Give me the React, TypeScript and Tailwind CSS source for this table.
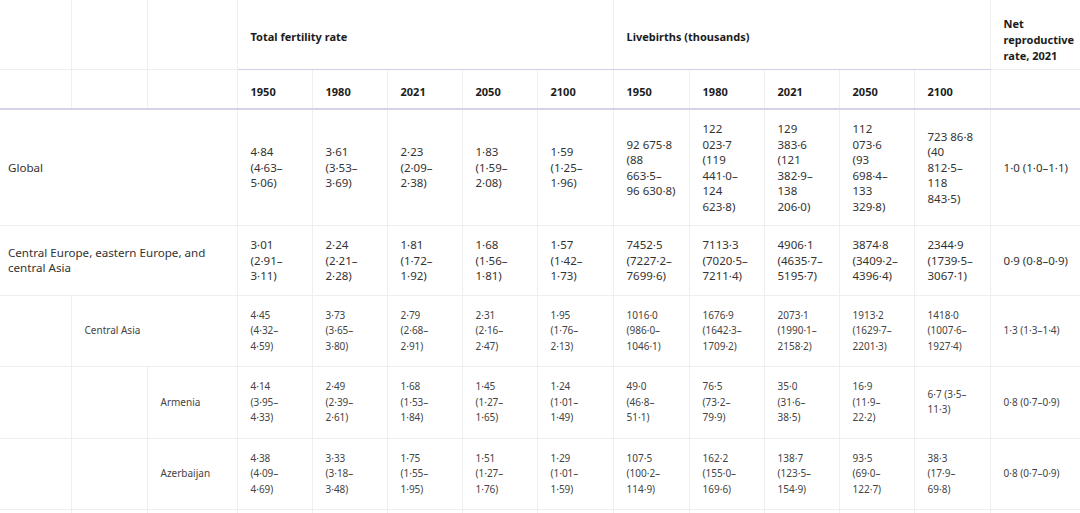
const FONT = { fontFamily: '"Noto Sans", Arial, sans-serif' };

const years = ["1950", "1980", "2021", "2050", "2100"];

type Row = {
  label: string;
  level: 0 | 1 | 2;
  tfr: string[];
  births: string[];
  nrr: string;
};

const rows: Row[] = [
  {
    label: "Global",
    level: 0,
    tfr: ["4·84 (4·63–5·06)", "3·61 (3·53–3·69)", "2·23 (2·09–2·38)", "1·83 (1·59–2·08)", "1·59 (1·25–1·96)"],
    births: [
      "92 675·8 (88 663·5–\n96 630·8)",
      "122 023·7 (119 441·0–124 623·8)",
      "129 383·6 (121 382·9–138 206·0)",
      "112 073·6 (93 698·4–133 329·8)",
      "723 86·8 (40 812·5–118 843·5)",
    ],
    nrr: "1·0 (1·0–1·1)",
  },
  {
    label: "Central Europe, eastern Europe, and central Asia",
    level: 0,
    tfr: ["3·01 (2·91–3·11)", "2·24 (2·21–2·28)", "1·81 (1·72–1·92)", "1·68 (1·56–1·81)", "1·57 (1·42–1·73)"],
    births: [
      "7452·5 (7227·2–7699·6)",
      "7113·3 (7020·5–7211·4)",
      "4906·1 (4635·7–5195·7)",
      "3874·8 (3409·2–4396·4)",
      "2344·9 (1739·5–3067·1)",
    ],
    nrr: "0·9 (0·8–0·9)",
  },
  {
    label: "Central Asia",
    level: 1,
    tfr: ["4·45 (4·32–4·59)", "3·73 (3·65–3·80)", "2·79 (2·68–2·91)", "2·31 (2·16–2·47)", "1·95 (1·76–2·13)"],
    births: [
      "1016·0 (986·0–1046·1)",
      "1676·9 (1642·3–1709·2)",
      "2073·1 (1990·1–2158·2)",
      "1913·2 (1629·7–2201·3)",
      "1418·0 (1007·6–1927·4)",
    ],
    nrr: "1·3 (1·3–1·4)",
  },
  {
    label: "Armenia",
    level: 2,
    tfr: ["4·14 (3·95–4·33)", "2·49 (2·39–2·61)", "1·68 (1·53–1·84)", "1·45 (1·27–1·65)", "1·24 (1·01–1·49)"],
    births: ["49·0 (46·8–51·1)", "76·5 (73·2–79·9)", "35·0 (31·6–38·5)", "16·9 (11·9–22·2)", "6·7 (3·5–11·3)"],
    nrr: "0·8 (0·7–0·9)",
  },
  {
    label: "Azerbaijan",
    level: 2,
    tfr: ["4·38 (4·09–4·69)", "3·33 (3·18–3·48)", "1·75 (1·55–1·95)", "1·51 (1·27–1·76)", "1·29 (1·01–1·59)"],
    births: [
      "107·5 (100·2–114·9)",
      "162·2 (155·0–169·6)",
      "138·7 (123·5–154·9)",
      "93·5 (69·0–122·7)",
      "38·3 (17·9–69·8)",
    ],
    nrr: "0·8 (0·7–0·9)",
  },
];

const grid = "border border-[#eeeef3]";

function DataRow({ row }: { row: Row }) {
  const big = row.level === 0;
  const cell = big
    ? `${grid} px-[13px] py-[11px] text-[11.5px] leading-[15.5px] text-[#333] align-middle whitespace-pre-line`
    : `${grid} px-[13px] py-[12px] text-[10px] leading-[15.5px] text-[#444] align-middle`;
  return (
    <tr>
      {row.level === 0 && (
        <td colSpan={3} className={`${cell} !pl-2 !text-[11.6px]`}>
          {row.label}
        </td>
      )}
      {row.level === 1 && (
        <>
          <td className={cell}></td>
          <td colSpan={2} className={cell}>
            {row.label}
          </td>
        </>
      )}
      {row.level === 2 && (
        <>
          <td className={cell}></td>
          <td className={cell}></td>
          <td className={cell}>{row.label}</td>
        </>
      )}
      {[...row.tfr, ...row.births].map((v, i) => (
        <td key={i} className={cell}>
          {v}
        </td>
      ))}
      <td className={cell}>{row.nrr}</td>
    </tr>
  );
}

export default function App() {
  const head = `${grid} px-[13px] text-[11px] leading-[16px] font-bold text-[#1c1c1c] text-left`;
  const top = `${head} pt-[14px] pb-[9px] align-middle`;
  const sub = `${head} pt-[14px] pb-[8px] align-middle border-b-2 border-b-[#d3d3e8]`;
  return (
    <div className="w-[1080px] h-[513px] overflow-hidden bg-white" style={FONT}>
      <table className="table-fixed border-collapse w-[1090px] border-hidden">
        <colgroup>
          <col className="w-[71px]" />
          <col className="w-[76px]" />
          <col className="w-[90px]" />
          <col className="w-[75px]" />
          <col className="w-[75px]" />
          <col className="w-[75px]" />
          <col className="w-[75px]" />
          <col className="w-[76px]" />
          <col className="w-[76px]" />
          <col className="w-[75px]" />
          <col className="w-[75px]" />
          <col className="w-[75px]" />
          <col className="w-[76px]" />
          <col className="w-[100px]" />
        </colgroup>
        <thead>
          <tr>
            <th className={top}></th>
            <th className={top}></th>
            <th className={top}></th>
            <th colSpan={5} className={`${top} border-b-[#cfcfe6]`}>
              Total fertility rate
            </th>
            <th colSpan={5} className={`${top} border-b-[#cfcfe6]`}>
              Livebirths (thousands)
            </th>
            <th className={`${head} pt-4 pb-[5px] align-top`}>Net reproductive rate, 2021</th>
          </tr>
          <tr>
            <th className={sub}></th>
            <th className={sub}></th>
            <th className={sub}></th>
            {[...years, ...years].map((y, i) => (
              <th key={i} className={sub}>
                {y}
              </th>
            ))}
            <th className={sub}></th>
          </tr>
        </thead>
        <tbody>
          {rows.map((r) => (
            <DataRow key={r.label} row={r} />
          ))}
          <tr>
            {Array.from({ length: 14 }).map((_, i) => (
              <td key={i} className={`${grid} h-[70px]`}></td>
            ))}
          </tr>
        </tbody>
      </table>
    </div>
  );
}
